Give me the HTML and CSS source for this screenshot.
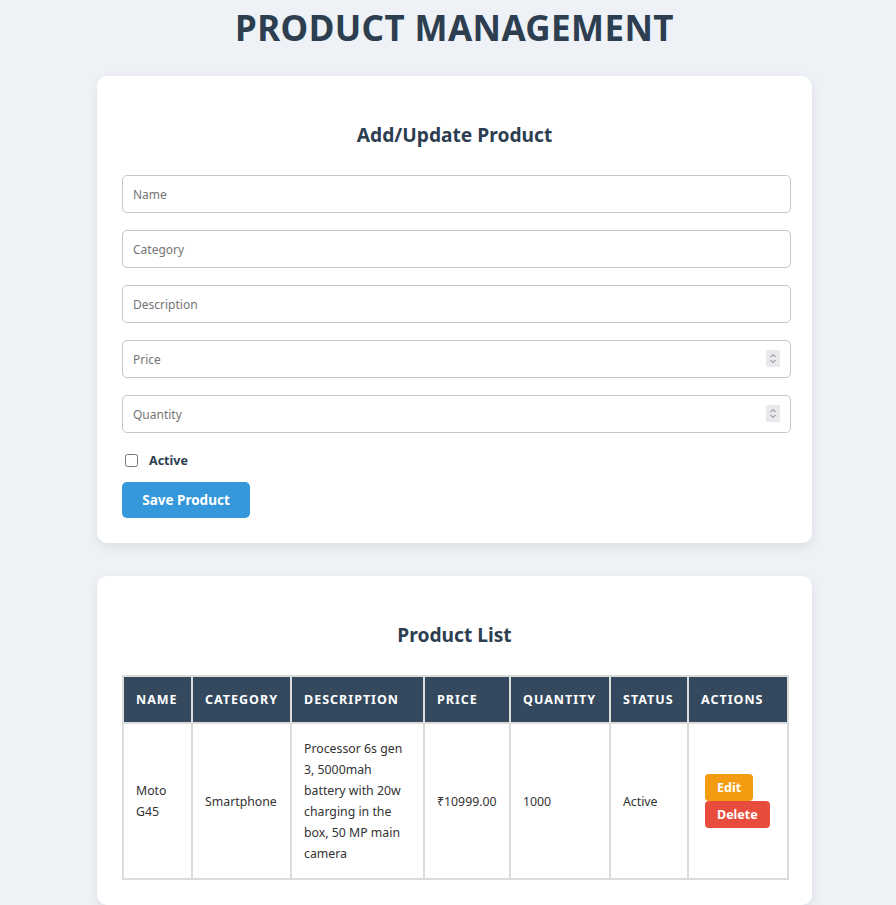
FILE: index.html
```html
<!DOCTYPE html>
<html lang="en">
<head>
<meta charset="utf-8">
<title>Product Management</title>
<link rel="stylesheet" href="styles.css">
</head>
<body>
<div class="container">
  <h1 class="page-title">PRODUCT MANAGEMENT</h1>

  <section class="card">
    <h2 class="card-title">Add/Update Product</h2>
    <form class="product-form">
      <input class="field" type="text" placeholder="Name">
      <input class="field" type="text" placeholder="Category">
      <input class="field" type="text" placeholder="Description">
      <div class="num-wrap">
        <input class="field" type="number" placeholder="Price">
        <span class="spin"><svg width="14" height="17" viewBox="0 0 14 17"><path d="M4.5 7 L7 4.5 L9.5 7 M4.5 10 L7 12.5 L9.5 10" fill="none" stroke="#767676" stroke-width="1"/></svg></span>
      </div>
      <div class="num-wrap">
        <input class="field" type="number" placeholder="Quantity">
        <span class="spin"><svg width="14" height="17" viewBox="0 0 14 17"><path d="M4.5 7 L7 4.5 L9.5 7 M4.5 10 L7 12.5 L9.5 10" fill="none" stroke="#767676" stroke-width="1"/></svg></span>
      </div>
      <label class="check-row"><input type="checkbox" class="check"> <span class="check-label">Active</span></label>
      <button type="button" class="btn btn-save">Save Product</button>
    </form>
  </section>

  <section class="card">
    <h2 class="card-title">Product List</h2>
    <table class="product-table">
      <thead>
        <tr>
          <th class="c-name">Name</th>
          <th class="c-cat">Category</th>
          <th class="c-desc">Description</th>
          <th class="c-price">Price</th>
          <th class="c-qty">Quantity</th>
          <th class="c-status">Status</th>
          <th class="c-actions">Actions</th>
        </tr>
      </thead>
      <tbody>
        <tr>
          <td>Moto G45</td>
          <td>Smartphone</td>
          <td>Processor 6s gen 3, 5000mah battery with 20w charging in the box, 50 MP main camera</td>
          <td>₹10999.00</td>
          <td>1000</td>
          <td>Active</td>
          <td class="actions"><button type="button" class="btn btn-edit">Edit</button><button type="button" class="btn btn-delete">Delete</button></td>
        </tr>
      </tbody>
    </table>
  </section>
</div>
</body>
</html>
```

FILE: styles.css
```css
* { box-sizing: border-box; }

body {
  margin: 0;
  padding: 0 0 40px 13px;
  background: #eef2f7;
  font-family: "Noto Sans", sans-serif;
  color: #2c3e50;
}

.container {
  max-width: 715px;
  margin: 0 auto;
}

.page-title {
  margin: 6px 0 26px;
  text-align: center;
  font-size: 35px;
  font-weight: 700;
  letter-spacing: 0.4px;
  color: #2c3e50;
  line-height: 44px;
}

.card {
  background: #fff;
  border-radius: 10px;
  padding: 25px;
  margin-bottom: 33px;
  box-shadow: 0 4px 12px rgba(0, 0, 0, 0.08);
}

.card-title {
  margin: 20px 0 27px;
  text-align: center;
  font-size: 19.2px;
  line-height: 27px;
  font-weight: 700;
  color: #2c3e50;
}

.product-form {
  display: flex;
  flex-direction: column;
  align-items: flex-start;
}

.field {
  display: block;
  width: calc(100% + 4px);
  height: 38px;
  margin: 0 0 17px;
  padding: 0 10px;
  border: 1px solid #c3c7cc;
  border-radius: 5px;
  font-family: inherit;
  font-size: 12px;
  color: #333;
  background: #fff;
}

.field::placeholder { color: #757575; }

.field[type="number"] {
  -moz-appearance: textfield;
  appearance: textfield;
}

.field::-webkit-inner-spin-button,
.field::-webkit-outer-spin-button {
  -webkit-appearance: none;
  margin: 0;
}

.num-wrap {
  position: relative;
  width: 100%;
}

.num-wrap .field { width: calc(100% + 4px); }

.spin {
  position: absolute;
  top: 10px;
  right: 7px;
  width: 14px;
  height: 17px;
  background: #e9e9ed;
  border-radius: 1px;
  display: flex;
}

.check-row {
  display: flex;
  align-items: center;
  height: 20px;
  margin: 0 0 12px;
  font-size: 12.5px;
  font-weight: 700;
  color: #2c3e50;
}

.check {
  width: 13px;
  height: 13px;
  margin: 0 11px 0 3px;
}

.btn {
  border: none;
  color: #fff;
  font-family: inherit;
  font-weight: 700;
  cursor: pointer;
}

.btn-save {
  width: 128px;
  height: 36px;
  border-radius: 5px;
  background: #3498db;
  font-size: 13.5px;
}

.product-table {
  width: 100%;
  table-layout: fixed;
  border-collapse: collapse;
}

.product-table th,
.product-table td {
  border: 2px solid #dcdcdc;
  text-align: left;
  padding: 14px 12px;
}

.product-table th {
  background: #34495e;
  color: #fff;
  font-size: 12.5px;
  text-transform: uppercase;
  letter-spacing: 1px;
  font-weight: 700;
  line-height: 17px;
  white-space: nowrap;
}

.product-table td {
  color: #333;
  font-size: 12.3px;
  line-height: 21px;
  vertical-align: middle;
}

.c-name { width: 69px; }
.c-cat { width: 99px; }
.c-desc { width: 133px; }
.c-price { width: 86px; }
.c-qty { width: 100px; }
.c-status { width: 78px; }
.c-actions { width: 100px; }

.product-table td.actions { padding-left: 16px; padding-right: 6px; }

.btn-edit,
.btn-delete {
  display: inline-block;
  height: 27px;
  padding: 0 12px;
  border-radius: 4px;
  font-size: 12.5px;
  margin-right: 4px;
  vertical-align: top;
}

.btn-edit { background: #f39c12; }
.btn-delete { background: #e74c3c; }
```
